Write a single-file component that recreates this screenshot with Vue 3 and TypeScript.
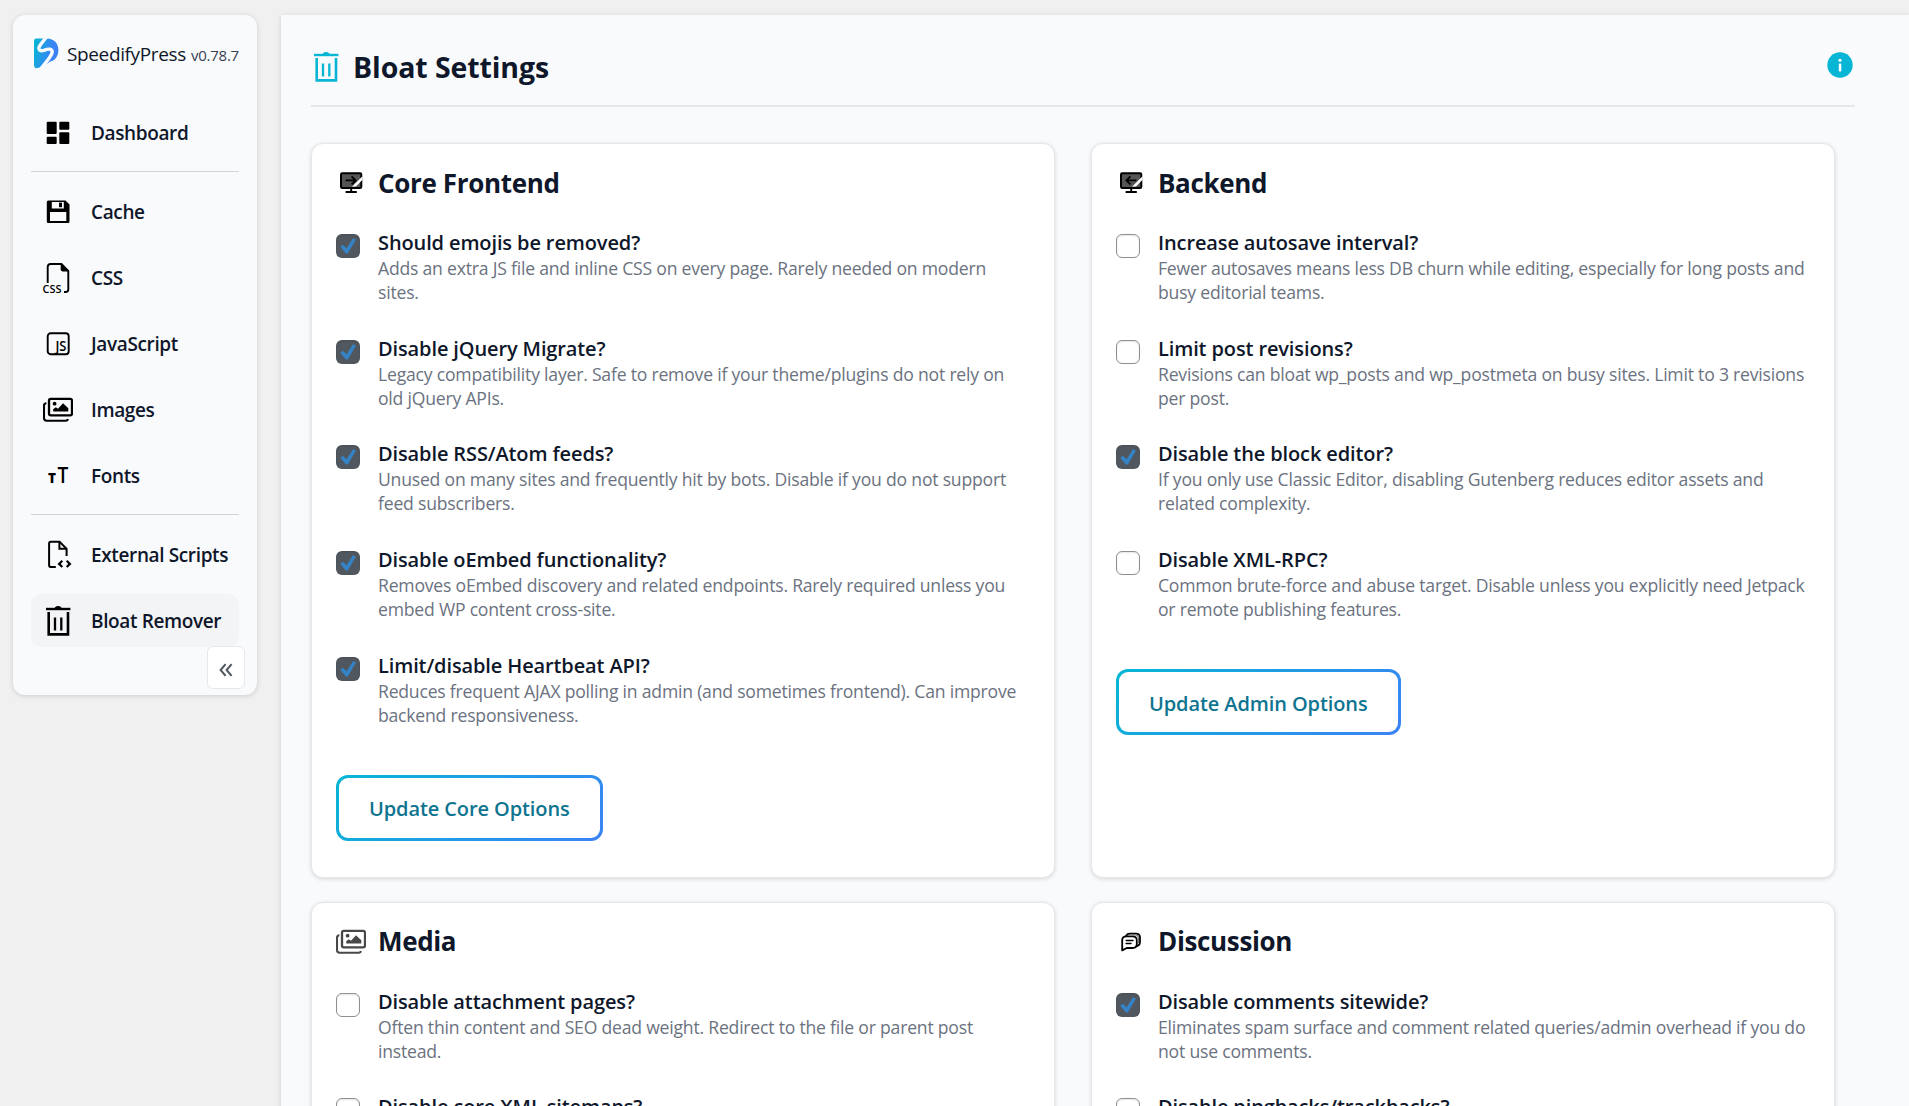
<script setup lang="ts">
interface Glyph {
  text: string
  x: number
  y: number
  size: number
  width: number
  weight: number
}

interface MenuItem {
  label: string
  icon: string
  glyphs?: Glyph[]
  active?: boolean
}

interface Option {
  title: string
  lines: string[]
  checked: boolean
}

interface Card {
  title: string
  icon: string
  options: Option[]
  button?: string
}

const menuGroups: MenuItem[][] = [
  [{ label: 'Dashboard', icon: 'dashboard' }],
  [
    { label: 'Cache', icon: 'cache' },
    { label: 'CSS', icon: 'css', glyphs: [{ text: 'CSS', x: -0.4, y: 29.6, size: 10.6, width: 18.8, weight: 600 }] },
    { label: 'JavaScript', icon: 'js', glyphs: [{ text: 'JS', x: 12.4, y: 22.4, size: 14.5, width: 11, weight: 600 }] },
    { label: 'Images', icon: 'images' },
    {
      label: 'Fonts',
      icon: 'fonts',
      glyphs: [
        { text: 'T', x: 5, y: 22.3, size: 13.8, width: 8, weight: 800 },
        { text: 'T', x: 14.4, y: 22.3, size: 22, width: 10.8, weight: 600 },
      ],
    },
  ],
  [
    { label: 'External Scripts', icon: 'external' },
    { label: 'Bloat Remover', icon: 'trash', active: true },
  ],
]

const cards: Card[] = [
  {
    title: 'Core Frontend',
    icon: 'frontend',
    button: 'Update Core Options',
    options: [
      { title: 'Should emojis be removed?', lines: ['Adds an extra JS file and inline CSS on every page. Rarely needed on modern', 'sites.'], checked: true },
      { title: 'Disable jQuery Migrate?', lines: ['Legacy compatibility layer. Safe to remove if your theme/plugins do not rely on', 'old jQuery APIs.'], checked: true },
      { title: 'Disable RSS/Atom feeds?', lines: ['Unused on many sites and frequently hit by bots. Disable if you do not support', 'feed subscribers.'], checked: true },
      { title: 'Disable oEmbed functionality?', lines: ['Removes oEmbed discovery and related endpoints. Rarely required unless you', 'embed WP content cross-site.'], checked: true },
      { title: 'Limit/disable Heartbeat API?', lines: ['Reduces frequent AJAX polling in admin (and sometimes frontend). Can improve', 'backend responsiveness.'], checked: true },
    ],
  },
  {
    title: 'Backend',
    icon: 'backend',
    button: 'Update Admin Options',
    options: [
      { title: 'Increase autosave interval?', lines: ['Fewer autosaves means less DB churn while editing, especially for long posts and', 'busy editorial teams.'], checked: false },
      { title: 'Limit post revisions?', lines: ['Revisions can bloat wp_posts and wp_postmeta on busy sites. Limit to 3 revisions', 'per post.'], checked: false },
      { title: 'Disable the block editor?', lines: ['If you only use Classic Editor, disabling Gutenberg reduces editor assets and', 'related complexity.'], checked: true },
      { title: 'Disable XML-RPC?', lines: ['Common brute-force and abuse target. Disable unless you explicitly need Jetpack', 'or remote publishing features.'], checked: false },
    ],
  },
  {
    title: 'Media',
    icon: 'images',
    options: [
      { title: 'Disable attachment pages?', lines: ['Often thin content and SEO dead weight. Redirect to the file or parent post', 'instead.'], checked: false },
      { title: 'Disable core XML sitemaps?', lines: [], checked: false },
    ],
  },
  {
    title: 'Discussion',
    icon: 'discussion',
    options: [
      { title: 'Disable comments sitewide?', lines: ['Eliminates spam surface and comment related queries/admin overhead if you do', 'not use comments.'], checked: true },
      { title: 'Disable pingbacks/trackbacks?', lines: [], checked: false },
    ],
  },
]
</script>

<template>
  <div class="page">
    <svg class="sprite" aria-hidden="true">
      <symbol id="i-dashboard" viewBox="0 0 30 30">
        <rect x="3.7" y="3.7" width="10" height="12.3" rx="1" />
        <rect x="3.7" y="18.7" width="10" height="7.4" rx="1" />
        <rect x="16.3" y="3.7" width="10" height="8" rx="1" />
        <rect x="16.3" y="14.2" width="10" height="11.9" rx="1" />
      </symbol>
      <symbol id="i-cache" viewBox="0 0 30 30">
        <path fill-rule="evenodd" d="M5.2 3.5H22.5L26.5 7.5V24.5Q26.5 26 25 26H5.2Q3.8 26 3.8 24.5V5Q3.8 3.5 5.2 3.5ZM8.8 5V11.6H20.8V5ZM7 14.9V23.9H23.3V14.9Z" />
        <rect x="16" y="5.6" width="3" height="4.6" />
      </symbol>
      <symbol id="i-css" viewBox="0 0 30 30">
        <path d="M4.7 20V4Q4.7 1 7.7 1H18.4L25.3 8V26.5Q25.3 29 22.5 29H21" fill="none" stroke="currentColor" stroke-width="1.9" />
        <path d="M17.7 .6L25.8 8.4H19.5Q17.7 8.4 17.7 6.6Z" />
      </symbol>
      <symbol id="i-js" viewBox="0 0 30 30">
        <rect x="4.7" y="4.2" width="21" height="21" rx="3" fill="none" stroke="currentColor" stroke-width="1.9" />
      </symbol>
      <symbol id="i-images" viewBox="0 0 30 30">
        <rect x="6" y="3.8" width="23" height="16.6" rx="1.8" fill="none" stroke="currentColor" stroke-width="2.3" />
        <path d="M3.4 8.3Q1 8.3 1 10.8V23Q1 25.8 3.8 25.8H23Q24.6 25.8 24.9 24" fill="none" stroke="currentColor" stroke-width="2.1" />
        <circle cx="11.6" cy="8.7" r="1.9" />
        <path d="M10.2 16.4V14.2L12.8 12.2L15 13.7L20 8.2L25.3 13.2V16.4Z" />
      </symbol>
      <symbol id="i-external" viewBox="0 0 30 30">
        <g fill="none" stroke="currentColor" stroke-width="2">
          <path d="M12.8 27H8Q6.1 27 6.1 25.2V3.5Q6.1 1.8 8 1.8H16.6L23.6 8.8V16" />
          <path d="M16.4 1.8V8.8H23.6" />
          <path d="M19.3 20.8L16.1 23.9L19.3 27M23.7 20.8L26.9 23.9L23.7 27" stroke-width="2.2" />
        </g>
      </symbol>
      <symbol id="i-trash" viewBox="0 0 30 30">
        <g fill="none" stroke="currentColor">
          <path d="M3 3H27.4" stroke-width="2.4" />
          <path d="M12.3 2.2Q15 -.2 18 2.2" stroke-width="1.8" />
          <path d="M5.7 6V28.4H25V6" stroke-width="2.6" />
          <path d="M12 11.4V24.4M18.3 11.4V24.4" stroke-width="2.3" />
        </g>
      </symbol>
      <symbol id="i-frontend" viewBox="0 0 30 30">
        <rect x="5" y="5.3" width="20.3" height="14.6" rx="1.2" fill="#555" stroke="#000" stroke-width="2" />
        <path d="M15.2 20V24M9.6 24H20.8" stroke="#000" stroke-width="1.9" fill="none" />
        <path d="M9.6 12.4H19.4M15.6 8.4L19.6 12.4L15.6 16.4" stroke="#000" stroke-width="1.9" fill="none" />
        <path d="M16 18.7L26.5 8.2V11.8L20 18.4Z" fill="#fff" />
      </symbol>
      <symbol id="i-backend" viewBox="0 0 30 30">
        <rect x="5" y="5.3" width="20.3" height="14.6" rx="1.2" fill="#555" stroke="#000" stroke-width="2" />
        <path d="M15.2 20V24M9.6 24H20.8" stroke="#000" stroke-width="1.9" fill="none" />
        <path d="M20.4 12.4H10.4M14.4 8.4L10.4 12.4L14.4 16.4" stroke="#000" stroke-width="1.9" fill="none" />
        <path d="M16 18.7L26.5 8.2V11.8L20 18.4Z" fill="#fff" />
      </symbol>
      <symbol id="i-discussion" viewBox="0 0 30 30">
        <g fill="none" stroke="#000" stroke-width="1.8" stroke-linejoin="round" stroke-linecap="round">
          <path d="M10.2 8.6Q11.2 6.6 14 6.6H20Q24 6.6 24 10.6V14.5Q24 18.4 20.8 19.2" />
          <path d="M6.2 23.4V13.4Q6.2 9.4 10.2 9.4H16.6Q20.8 9.4 20.8 13.4V17Q20.8 21 16.6 21H10.8Z" />
          <path d="M10.2 13.6H17M10.2 16.6H15" stroke-width="1.5" />
          <path d="M13 8H20Q22.4 8.2 22.4 11V15.5" stroke="#777" stroke-width="1.2" />
        </g>
      </symbol>
    </svg>

    <aside class="sidebar">
      <div class="brand">
        <svg class="logo" width="25" height="31" viewBox="0 0 25 31">
          <defs>
            <linearGradient id="brand-fill" x1="0" y1="0.2" x2="1" y2="0.5">
              <stop offset="0" stop-color="#06b6d4" />
              <stop offset="0.75" stop-color="#3b82f6" />
            </linearGradient>
          </defs>
          <path fill="url(#brand-fill)" d="M0 3Q0 .5 2.5 .5H13C20 .5 24.4 5.5 24.4 12.2C24.4 18.5 20.8 22.6 14 25.2L5.4 29.6Q0 32 0 26.5Z" />
          <path fill="none" stroke="#f9fafc" stroke-width="3.4" d="M12.5 -1L6.4 6.8C3 11.5 6 13.6 10 12.4C14 10.6 19.6 10 17.8 15.6C16.8 19 13.8 22.4 7 30.5" />
          <path fill="#f9fafc" d="M10 31L15.5 23.8L20 22.5V31Z" />
        </svg>
        <span class="brand-name">SpeedifyPress</span>
        <span class="brand-version">v0.78.7</span>
      </div>

      <nav class="menu">
        <template v-for="(group, g) in menuGroups" :key="g">
          <div v-if="g > 0" class="divider"></div>
          <a v-for="item in group" :key="item.label" class="menu-item" :class="{ active: item.active }">
            <svg class="icon" viewBox="0 0 30 30">
              <use :href="`#i-${item.icon}`" />
              <text
                v-for="glyph in item.glyphs"
                :key="glyph.x"
                class="glyph"
                :x="glyph.x"
                :y="glyph.y"
                :font-size="glyph.size"
                :font-weight="glyph.weight"
                :textLength="glyph.width"
                lengthAdjust="spacingAndGlyphs"
              >{{ glyph.text }}</text>
            </svg>
            <span>{{ item.label }}</span>
          </a>
        </template>
      </nav>

      <button class="collapse" aria-label="Collapse menu">
        <svg width="14" height="14" viewBox="0 0 14 14" fill="none" stroke="#50575e" stroke-width="2">
          <path d="M6.6 1.2L1.6 7L6.6 12.8M12.6 1.2L7.6 7L12.6 12.8" />
        </svg>
      </button>
    </aside>

    <main class="content">
      <header class="page-header">
        <svg class="icon cyan"><use href="#i-trash" /></svg>
        <h1>Bloat Settings</h1>
        <svg class="info" width="26" height="26" viewBox="0 0 26 26">
          <circle cx="13" cy="13" r="12.7" fill="#06b6d4" />
          <circle cx="13" cy="8.3" r="1.6" fill="#fff" />
          <rect x="11.8" y="11.6" width="2.5" height="7.8" fill="#fff" />
        </svg>
      </header>

      <div class="cards">
        <section v-for="card in cards" :key="card.title" class="card">
          <div class="card-head">
            <svg class="icon" :class="{ muted: card.icon === 'images' }"><use :href="`#i-${card.icon}`" /></svg>
            <h2>{{ card.title }}</h2>
          </div>
          <div class="options">
            <label v-for="option in card.options" :key="option.title" class="option">
              <span class="box" :class="{ checked: option.checked }">
                <svg v-if="option.checked" width="24" height="24" viewBox="0 0 24 24">
                  <path d="M4.2 12.7L6.9 10.7L10.6 14.3L16.9 4.2L20 5.6L11.9 19.4H9.8Z" fill="#3582c4" />
                </svg>
              </span>
              <span class="option-text">
                <span class="option-title">{{ option.title }}</span>
                <span v-for="line in option.lines" :key="line" class="option-line">{{ line }}</span>
              </span>
            </label>
          </div>
          <button v-if="card.button" class="update">{{ card.button }}</button>
        </section>
      </div>
    </main>
  </div>
</template>

<style>
body {
  margin: 0;
  overflow: hidden;
  background: #f0f0f1;
}
</style>

<style scoped>
.page {
  box-sizing: border-box;
  display: flex;
  align-items: flex-start;
  gap: 24px;
  height: 1106px;
  padding: 15px 0 0 13px;
  overflow: hidden;
  font-family: "Open Sans", "Noto Sans", sans-serif;
  color: #0f172a;
}

.sprite {
  position: absolute;
  width: 0;
  height: 0;
}

.icon {
  flex: none;
  width: 30px;
  height: 30px;
  overflow: visible;
  color: #000;
  fill: currentColor;
}

.icon.cyan {
  color: #06b6d4;
}

.icon.muted {
  color: #484848;
}

.glyph {
  letter-spacing: 0;
}

.sidebar {
  position: relative;
  box-sizing: border-box;
  flex: none;
  width: 244px;
  height: 680px;
  padding: 23px 18px 0;
  border-radius: 12px;
  background: #f9fafc;
  box-shadow: 0 1px 5px rgba(0, 0, 0, 0.15);
}

.brand {
  display: flex;
  align-items: baseline;
  height: 32px;
  padding-left: 3px;
  white-space: nowrap;
}

.logo {
  flex: none;
  align-self: flex-start;
  margin-right: 8px;
}

.brand-name {
  width: 124px;
  font-size: 19px;
  line-height: 32px;
  letter-spacing: -0.37px;
}

.brand-version {
  font-size: 15px;
  letter-spacing: -0.25px;
  color: #374151;
}

.menu {
  display: flex;
  flex-direction: column;
  gap: 13px;
  margin-top: 36px;
}

.divider {
  height: 1px;
  margin-top: -1px;
  background: #d1d5db;
}

.menu-item {
  display: flex;
  align-items: center;
  gap: 18px;
  height: 53px;
  padding-left: 12px;
  border-radius: 10px;
  font-size: 19px;
  font-weight: 600;
  letter-spacing: -0.37px;
  white-space: nowrap;
}

.menu-item.active {
  background: #f3f4f6;
}

.collapse {
  position: absolute;
  right: 12px;
  bottom: 6px;
  display: flex;
  align-items: center;
  justify-content: center;
  width: 38px;
  height: 43px;
  padding: 4px 0 0;
  border: 1px solid #e5e7eb;
  border-radius: 6px;
  background: #fff;
}

.content {
  box-sizing: border-box;
  flex: 1;
  height: 1200px;
  padding: 0 54px 0 30px;
  background: #f9fafc;
  box-shadow: 0 1px 5px rgba(0, 0, 0, 0.15);
}

.page-header {
  box-sizing: border-box;
  display: flex;
  align-items: center;
  height: 92px;
  padding-top: 13px;
  border-bottom: 2px solid #e5e7eb;
}

h1 {
  margin: 1px 0 0 12px;
  font-size: 28.5px;
  line-height: 40px;
  font-weight: 700;
  letter-spacing: -0.1px;
}

.info {
  margin: -3px 2px 0 auto;
}

.cards {
  display: grid;
  grid-template-columns: 744px 744px;
  gap: 24px 36px;
  margin-top: 36px;
}

.card {
  box-sizing: border-box;
  padding: 24px 24px 36px;
  border: 1px solid #e5e7eb;
  border-radius: 12px;
  background: #fff;
  box-shadow: 0 1px 4px rgba(0, 0, 0, 0.14);
}

.card-head {
  display: flex;
  align-items: center;
  gap: 12px;
  height: 30px;
}

h2 {
  margin: -1px 0 0;
  font-size: 26px;
  line-height: 30px;
  font-weight: 700;
  letter-spacing: -0.35px;
}

.options {
  display: flex;
  flex-direction: column;
  gap: 30.7px;
  margin-top: 31px;
}

.option {
  display: flex;
  gap: 18px;
}

.box {
  box-sizing: border-box;
  flex: none;
  width: 24px;
  height: 24px;
  margin-top: 5px;
  border: 1px solid #8c8f94;
  border-radius: 6px;
  background: #fff;
  box-shadow: inset 0 1px 2px rgba(0, 0, 0, 0.1);
}

.box.checked {
  border: 0;
  background: #50575e;
}

.box svg {
  display: block;
}

.option-text {
  display: flex;
  flex-direction: column;
  white-space: nowrap;
}

.option-title {
  height: 27px;
  font-size: 20px;
  line-height: 27px;
  font-weight: 600;
  letter-spacing: -0.12px;
}

.option-line {
  height: 24px;
  font-size: 17.6px;
  line-height: 24px;
  letter-spacing: -0.21px;
  color: #6b7280;
}

.update {
  height: 66px;
  margin-top: 48px;
  padding: 2px 30px 0;
  border: 3px solid transparent;
  border-radius: 12px;
  background:
    linear-gradient(#fff, #fff) padding-box,
    linear-gradient(135deg, #06b6d4, #3b82f6) border-box;
  font: inherit;
  font-size: 20px;
  font-weight: 600;
  letter-spacing: -0.1px;
  color: #0e7490;
  white-space: nowrap;
}
</style>
